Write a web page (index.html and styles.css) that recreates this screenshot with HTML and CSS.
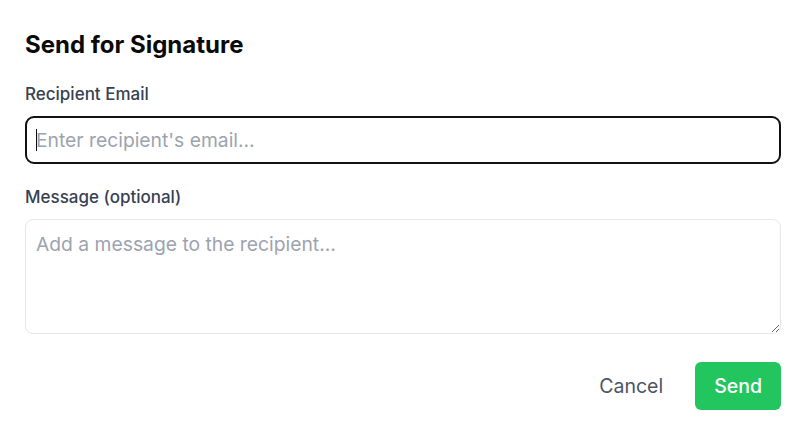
FILE: index.html
```html
<!DOCTYPE html>
<html lang="en">
<head>
<meta charset="utf-8">
<link rel="stylesheet" href="styles.css">
<title>Send for Signature</title>
</head>
<body>
<div class="dialog">
  <h2 class="title">Send for Signature</h2>
  <div class="field">
    <label class="label" for="email">Recipient Email</label>
    <div class="input-wrap">
      <input class="input" id="email" type="email" placeholder="Enter recipient's email...">
      <span class="caret"></span>
    </div>
  </div>
  <div class="field">
    <label class="label" for="msg">Message (optional)</label>
    <textarea class="textarea" id="msg" placeholder="Add a message to the recipient..."></textarea>
  </div>
  <div class="actions">
    <button class="btn btn-cancel" type="button">Cancel</button>
    <button class="btn btn-send" type="button">Send</button>
  </div>
</div>
</body>
</html>
```
FILE: styles.css
```css
* { box-sizing: border-box; }
html, body { margin: 0; background: #ffffff; }
body {
  font-family: Inter, "Noto Sans", sans-serif;
  color: #111827;
}
.dialog {
  width: 806px;
  padding: 29px 25px 0 25px;
  display: flex;
  flex-direction: column;
}
.title {
  margin: 0 0 21px 0;
  font-size: 24px;
  line-height: 32px;
  font-weight: 700;
  color: #0a0a0a;
}
.field {
  display: flex;
  flex-direction: column;
  margin-bottom: 21px;
}
.label {
  font-size: 17px;
  line-height: 24px;
  font-weight: 500;
  color: #374151;
  margin-bottom: 10px;
}
.input-wrap {
  position: relative;
  display: flex;
  flex-direction: column;
}
.input {
  height: 48px;
  border: 2px solid #111111;
  border-radius: 9px;
  padding: 0 9px;
  font-family: inherit;
  font-size: 19.3px;
  color: #111827;
  outline: none;
  background: #fff;
}
.caret {
  position: absolute;
  left: 11px;
  top: 13px;
  width: 1px;
  height: 22px;
  background: #111111;
}
.input::placeholder, .textarea::placeholder { color: #9ca3af; }
.textarea {
  height: 115px;
  border: 1px solid #e5e7eb;
  border-radius: 8px;
  padding: 11px 10px;
  font-family: inherit;
  font-size: 19.3px;
  line-height: 26px;
  color: #111827;
  outline: none;
  resize: vertical;
  background: #fff;
}
.actions {
  display: flex;
  justify-content: flex-end;
  gap: 14px;
  margin-top: 7px;
}
.btn {
  height: 48px;
  border: none;
  border-radius: 6px;
  padding: 0 20px;
  font-family: inherit;
  font-size: 19.5px;
  font-weight: 500;
  cursor: pointer;
  background: transparent;
}
.btn-cancel { color: #4b5563; padding: 0 18px; font-weight: 400; }
.btn-send { background: #22c55e; color: #ffffff; padding: 0 19px; }
```
